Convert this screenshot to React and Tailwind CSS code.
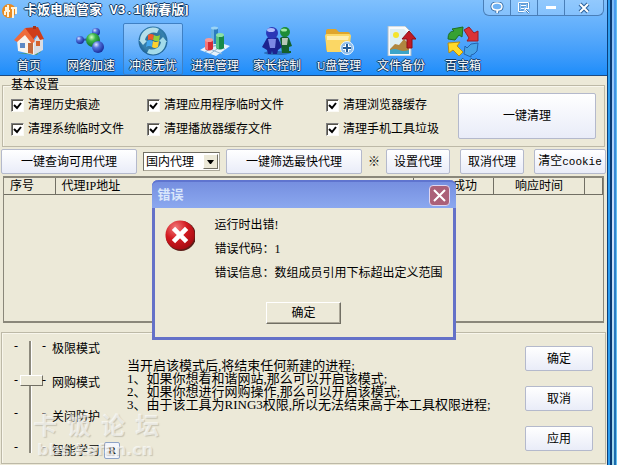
import React, { useState } from "react";

const buttonStyle =
  "rounded-xs border border-[#b4b9cc] bg-linear-to-b from-white to-[#e9ecf8] text-center whitespace-nowrap";

const HomeIcon = () => (
  <svg viewBox="0 0 30 30" className="size-[30px]">
    <path d="M3 27h23l2-4-5 6z" fill="#4b9a35" opacity=".7" />
    <path d="M3 14 10 7l10 8v14L4 25z" fill="#f7f3ee" />
    <path d="m20 15 5-7 4 5v11l-9 5z" fill="#d9dce2" />
    <path d="m11 2 13-1 6 12-4 1-3-5-5 6z" fill="#cf3d1b" />
    <path d="M0 14 11 2l10 13-3 3-7-9-8 7z" fill="#ee6b3c" />
    <path d="M14 17h5v11l-5-1z" fill="#c2683a" />
    <path d="M6 17h5v5H6z" fill="#5b88c4" />
    <path d="M22 15h4v5h-4z" fill="#d5632c" />
    <path d="M19 3V0h3v3z" fill="#a63319" />
  </svg>
);

const NetworkIcon = () => (
  <svg viewBox="0 0 30 30" className="size-[30px]">
    <defs>
      <radialGradient id="ballBlue" cx=".35" cy=".3" r=".7">
        <stop offset="0" stopColor="#dfe6ff" />
        <stop offset=".4" stopColor="#5272dc" />
        <stop offset="1" stopColor="#1b2f9c" />
      </radialGradient>
      <radialGradient id="ballGreen" cx=".4" cy=".3" r=".7">
        <stop offset="0" stopColor="#d3ffc6" />
        <stop offset=".4" stopColor="#3db649" />
        <stop offset="1" stopColor="#0c6a2b" />
      </radialGradient>
    </defs>
    <path d="m5 14 11-1 5-8M16 14l7 8" stroke="#31539f" strokeWidth="2" fill="none" />
    <circle cx="4" cy="14" r="4" fill="url(#ballBlue)" />
    <circle cx="20" cy="6" r="4" fill="url(#ballBlue)" />
    <circle cx="17" cy="14" r="7" fill="url(#ballGreen)" />
    <circle cx="22" cy="21" r="6" fill="url(#ballBlue)" />
  </svg>
);

const SurfIcon = () => (
  <svg viewBox="0 0 30 30" className="size-[30px]">
    <defs>
      <radialGradient id="orb" cx=".5" cy=".45" r=".55">
        <stop offset="0" stopColor="#2a5f88" />
        <stop offset=".7" stopColor="#3681ae" />
        <stop offset="1" stopColor="#1c5f93" />
      </radialGradient>
    </defs>
    <circle cx="15" cy="15" r="14.5" fill="url(#orb)" />
    <path d="M2 14A13 13 0 0 1 21 3l-2 4A9 9 0 0 0 7 14l2 1-4 4-4-5z" fill="#b5dfe9" />
    <path d="M28 16A13 13 0 0 1 9 27l2-4a9 9 0 0 0 12-7l-2-1 4-4 4 5z" fill="#a3dbea" />
    <path d="M10 9q3-2 6 0l-1 5q-3-1-5 0z" fill="#f0582a" />
    <path d="M16 9q3 2 6 0l-1 6q-3 1-6-1z" fill="#8fce3c" />
    <path d="M9 15q3-2 6 0l-1 6q-3-2-6 0z" fill="#42a7ee" />
    <path d="M15 15q3 2 6 0l-1 6q-3 2-6 0z" fill="#ffd02e" />
  </svg>
);

const ProcessIcon = () => (
  <svg viewBox="0 0 30 30" className="size-[30px]">
    <path d="m0 24 15-9 15 5-14 10z" fill="#e6f1fa" />
    <path d="m5 21 17 7M10 18l15 5M5 26l16-10M10 28l14-10" stroke="#8fb5d4" />
    <path d="M11 2h7v16h-7z" fill="#2b7cc0" />
    <path d="M11 2h3v16h-3z" fill="#65b0e4" />
    <ellipse cx="14.500" cy="2" rx="3.500" ry="1.500" fill="#9ad3f5" />
    <path d="M5 14h8v9q-4 3-8 0z" fill="#d32b34" />
    <path d="M5 14h3v10l-3-1z" fill="#f3777a" />
    <ellipse cx="9" cy="14" rx="4" ry="2" fill="#f79a98" />
    <path d="M16 9h8v13q-4 3-8 0z" fill="#178a49" />
    <path d="M16 9h3v14l-3-1z" fill="#55c282" />
    <ellipse cx="20" cy="9" rx="4" ry="2" fill="#8be0a8" />
  </svg>
);

const ParentIcon = () => (
  <svg viewBox="0 0 30 30" className="size-[30px]">
    <ellipse cx="15" cy="27" rx="13" ry="2" fill="#123f77" opacity=".5" />
    <path d="M18 12q5-4 9 0l3 8-3 1v4h2v2h-9z" fill="#14602c" />
    <path d="M20 12h6l-1 7h-5z" fill="#b7c7b7" />
    <circle cx="23" cy="6" r="5" fill="#1d8d36" />
    <ellipse cx="22" cy="4" rx="3" ry="1.500" fill="#a0e8a4" />
    <path d="M5 12q6-3 11 0l4 9-4 3-1 4h-4l-1-3-1 3H6l-1-4-5-3z" fill="#1c238f" />
    <path d="M6 13h8l-1 9H8z" fill="#7c89e4" />
    <circle cx="10" cy="7" r="6" fill="#2b37b7" />
    <ellipse cx="9" cy="4" rx="4" ry="2" fill="#b2bdfb" />
  </svg>
);

const UsbIcon = () => (
  <svg viewBox="0 0 30 30" className="size-[30px]">
    <path d="M2 5q0-2 2-2h8l3 3h9q2 0 2 2v17H4q-2 0-2-2z" fill="#dfa52c" />
    <path d="M1 10q0-2 2-2h22q2 0 2 2l-2 16H3z" fill="#fbd765" />
    <path d="M3 10h22l-1 4H3z" fill="#ffeeb0" />
    <circle cx="23" cy="22" r="6.500" fill="#8fbce8" stroke="#e9f5ff" />
    <path d="M23 18v8M19 22h8" stroke="#fff" strokeWidth="4" />
    <path d="M23 18v8M19 22h8" stroke="#245b95" strokeWidth="2" />
  </svg>
);

const BackupIcon = () => (
  <svg viewBox="0 0 30 30" className="size-[30px]">
    <path d="M2 0h17l6 6v24H2z" fill="#f8fafb" stroke="#a9bccb" />
    <path d="M4 3h14l5 5v20H4z" fill="#dceef4" />
    <circle cx="10" cy="9" r="3" fill="#f5e42e" />
    <path d="m4 23 5-5 4 1 5-6 5 5v7H4z" fill="#b0863f" />
    <path d="M4 24q5-2 9 0t10 0v4H4z" fill="#3ca5c8" />
    <path d="m23 5 7 8h-4v9h-5v-9h-5z" fill="#c01c24" stroke="#8d0e16" />
  </svg>
);

const ToolboxIcon = () => (
  <svg viewBox="0 0 32 32" className="size-8">
    <path d="M1 13Q1 5 7 5L5 3l11-2-1 10-3-2-4 5z" fill="#36a132" stroke="#1e6f22" />
    <path d="m17 4 5-3 5 6 4-2v10H20l2-3z" fill="#db3236" stroke="#991c26" />
    <path d="m1 17 12-1-3 4 6 6-4 4-6-6-4 3z" fill="#ffda2a" stroke="#b98d10" />
    <path d="m31 17-1 8q-3 4-6 4v2l-7-3 1-8 2 2 4-4z" fill="#47a4e8" stroke="#2264af" />
  </svg>
);

const tools = [
  { name: "首页", Icon: HomeIcon },
  { name: "网络加速", Icon: NetworkIcon },
  { name: "冲浪无忧", Icon: SurfIcon, active: true },
  { name: "进程管理", Icon: ProcessIcon },
  { name: "家长控制", Icon: ParentIcon },
  { name: "U盘管理", Icon: UsbIcon },
  { name: "文件备份", Icon: BackupIcon },
  { name: "百宝箱", Icon: ToolboxIcon },
];

const cleanOptions = [
  "清理历史痕迹",
  "清理应用程序临时文件",
  "清理浏览器缓存",
  "清理系统临时文件",
  "清理播放器缓存文件",
  "清理手机工具垃圾",
];

const modes = ["极限模式", "网购模式", "关闭防护", "智能学习"];

const outlined =
  "text-white [text-shadow:1px_0_#123a66,-1px_0_#123a66,0_1px_#123a66,0_-1px_#123a66]";

const WindowControls = () => (
  <div className="mr-[3px] flex h-4 divide-x divide-[#4a7fb8] rounded-b-md border border-t-0 border-[#4a7fb8] bg-white/15">
    <button aria-label="反馈" className="flex w-[27px] items-center justify-center">
      <svg viewBox="0 0 14 12" className="h-3 w-3.5">
        <path
          d="M7 1c3 0 5 1 5 3.500S10 8 8 8l-1 3V8C4 8 2 7 2 4.500S4 1 7 1z"
          fill="none"
          stroke="#2c629c"
          strokeWidth="3"
        />
        <path
          d="M7 1c3 0 5 1 5 3.500S10 8 8 8l-1 3V8C4 8 2 7 2 4.500S4 1 7 1z"
          fill="#6fb2f4"
          stroke="#fff"
          strokeWidth="1.500"
        />
      </svg>
    </button>
    <button aria-label="菜单" className="flex w-[27px] items-center justify-center">
      <svg viewBox="0 0 12 12" className="size-3">
        <path d="M.5.5h10v6M.5.500v9h5M3 3.500h5M3 6.500h3M7 7l4 4" fill="none" stroke="#3f78b4" strokeWidth="2" />
        <path d="M6 9.500H.5v-9h10V6M3 3.500h5M3 6.500h3m1 .5 4 4m-4-1V6.500h4" fill="none" stroke="#fff" />
      </svg>
    </button>
    <button aria-label="最小化" className="flex w-[27px] items-center justify-center">
      <span className="h-[3px] w-2.5 bg-white"></span>
    </button>
    <button aria-label="关闭" className="flex w-[38px] items-center justify-center">
      <svg viewBox="0 0 12 12" className="size-3">
        <path d="m2 2 8 8m0-8-8 8" stroke="#2c629c" strokeWidth="4" />
        <path d="m2 2 8 8m0-8-8 8" stroke="#fff" strokeWidth="2" />
      </svg>
    </button>
  </div>
);

const Header = () => (
  <header className="border-b border-[#1d4a80] bg-linear-to-b from-[#7fc0fd] via-[#55a8fb] to-[#1b8dfa]">
    <div className="flex h-[23px] items-start justify-between">
      <div className="flex items-center gap-1.5 pl-0.5">
        <svg viewBox="0 0 16 18" className="h-[18px] w-4">
          <circle cx="7" cy="9" r="7" fill="#e98b22" />
          <path d="M4 5v4h4M6 3v12M3 9v4M11 5v11M9 6h5v6" fill="none" stroke="#fff4dc" strokeWidth="2" />
        </svg>
        <h1 className={`text-[13px] leading-5 font-bold ${outlined}`}>
          卡饭电脑管家<span className="font-['Liberation_Mono']"> V3.1</span>
          [新春版]
        </h1>
      </div>
      <WindowControls />
    </div>
    <nav className="-ml-px flex gap-0.5">
      {tools.map(({ name, Icon, active }) => (
        <button
          key={name}
          className={`flex h-[52px] w-[60px] flex-col items-center justify-between rounded-xs border pt-0.5 ${
            active
              ? "border-[#3f80c4] bg-linear-to-b from-white/30 to-white/5"
              : "border-transparent"
          }`}
        >
          <Icon />
          <span className={`leading-4 whitespace-nowrap ${outlined}`}>{name}</span>
        </button>
      ))}
    </nav>
  </header>
);

const CheckOption = ({ label }) => (
  <label className="flex items-center gap-1">
    <span className="grid">
      <input
        type="checkbox"
        defaultChecked
        className="peer col-start-1 row-start-1 size-[13px] appearance-none border border-t-[#808080] border-r-[#fbfaf5] border-b-[#fbfaf5] border-l-[#808080] bg-white shadow-[inset_1px_1px_#55534a]"
      />
      <svg
        viewBox="0 0 13 13"
        className="pointer-events-none invisible col-start-1 row-start-1 size-[13px] peer-checked:visible"
      >
        <path d="m3 6 3 3 4-5" fill="none" stroke="#000" strokeWidth="2" />
      </svg>
    </span>
    {label}
  </label>
);

const ErrorDialog = ({ onClose }) => (
  <div
    role="dialog"
    aria-labelledby="error-title"
    className="absolute top-[180px] left-1/2 w-[304px] -translate-x-1/2 rounded-t-md border-x-3 border-b-3 border-[#6471c8] bg-[#ece9d8]"
  >
    <div className="-mx-[3px] flex h-7 items-center justify-between rounded-t-md border-t-2 border-[#5f74cf] bg-linear-to-b from-[#768fe0] to-[#8ba8ef] pr-1.5 pl-1.5">
      <h2 id="error-title" className="text-[13px] font-bold text-[#d9e6fb]">
        错误
      </h2>
      <button
        aria-label="关闭"
        onClick={onClose}
        className="flex size-[21px] items-center justify-center rounded-sm border border-[#dfd6f0] bg-[#ab6078]"
      >
        <svg viewBox="0 0 13 13" className="size-[13px]">
          <path d="m1 1 11 11m0-11L1 12" stroke="#fff" strokeWidth="2" />
        </svg>
      </button>
    </div>
    <div className="flex gap-[19px] px-2.5 pt-[5px]">
      <svg viewBox="0 0 33 33" className="mt-1.5 size-[33px]">
        <defs>
          <radialGradient id="error" cx=".35" cy=".25" r=".8">
            <stop offset="0" stopColor="#f27a7a" />
            <stop offset=".5" stopColor="#d21a20" />
            <stop offset="1" stopColor="#a30a10" />
          </radialGradient>
        </defs>
        <circle cx="17" cy="17" r="16" fill="#5b1d18" />
        <circle cx="16" cy="16" r="15.500" fill="url(#error)" />
        <path d="m9 9 14 14m0-14L9 23" stroke="#fff" strokeWidth="5" />
      </svg>
      <div className="leading-6 whitespace-nowrap">
        <p>运行时出错!</p>
        <p>错误代码：1</p>
        <p>错误信息：数组成员引用下标超出定义范围</p>
      </div>
    </div>
    <div className="pt-[17px] pb-[13px] text-center">
      <button
        onClick={onClose}
        className="h-[22px] w-[75px] border border-t-white border-r-[#716f64] border-b-[#716f64] border-l-white shadow-[inset_-1px_-1px_#aca899]"
      >
        确定
      </button>
    </div>
  </div>
);

const CleanSettings = () => (
  <fieldset className="mx-0.5 mt-px flex items-center justify-between border border-[#bdb9a7] pr-2 pb-[7px] pl-2 shadow-[inset_1px_1px_#f8f6ec]">
    <legend className="leading-4">基本设置</legend>
    <div className="grid grid-cols-[136px_179px_auto] gap-y-2 pt-0.5 leading-4">
      {cleanOptions.map((option) => (
        <CheckOption key={option} label={option} />
      ))}
    </div>
    <button className={`h-[46px] w-[138px] ${buttonStyle}`}>一键清理</button>
  </fieldset>
);

const ProxyBar = () => (
  <div className="mt-0.5 flex items-center justify-between px-px">
    <div className="flex items-center gap-1.5">
      <button className={`h-[25px] w-[136px] ${buttonStyle}`}>一键查询可用代理</button>
      <div className="relative">
        <select
          aria-label="代理类型"
          className="block h-[19px] w-[77px] appearance-none border border-t-[#716f64] border-r-[#aca899] border-b-[#aca899] border-l-[#716f64] bg-white pl-0.5"
        >
          <option>国内代理</option>
          <option>国外代理</option>
        </select>
        <span className="pointer-events-none absolute inset-y-0.5 right-0.5 flex w-[15px] items-center justify-center border border-t-white border-r-[#716f64] border-b-[#716f64] border-l-white bg-[#ece9d8]">
          <svg viewBox="0 0 7 4" className="h-1 w-[7px]">
            <path d="M0 0h7L4 4H3z" />
          </svg>
        </span>
      </div>
      <button className={`h-[25px] w-[136px] ${buttonStyle}`}>一键筛选最快代理</button>
      <span>※</span>
    </div>
    <div className="flex gap-2.5">
      <button className={`h-[25px] w-16 ${buttonStyle}`}>设置代理</button>
      <button className={`h-[25px] w-16 ${buttonStyle}`}>取消代理</button>
      <button className={`h-[25px] w-[72px] ${buttonStyle}`}>
        清空<span className="font-['Liberation_Mono'] text-[11px]">cookie</span>
      </button>
    </div>
  </div>
);

const ProxyTable = () => (
  <div className="mx-[3px] mt-0.5 h-[147px] border-x border-t-2 border-b-2 border-[#8a877a]">
    <table className="w-full table-fixed border-collapse text-left leading-4">
      <thead>
        <tr className="border-b border-[#716f64] [&>th]:border-r [&>th]:border-[#716f64] [&>th]:p-0 [&>th]:font-normal">
          <th className="w-[51px]">
            <span className="pl-1.5">序号</span>
          </th>
          <th>
            <span className="pl-1.5">代理IP地址</span>
          </th>
          <th className="w-20 text-right">
            <span className="pr-4">成功</span>
          </th>
          <th className="w-[91px] text-center">响应时间</th>
          <th className="w-[18px]"></th>
        </tr>
      </thead>
      <tbody></tbody>
    </table>
  </div>
);

const ModePanel = () => {
  const [mode, setMode] = useState(1);

  return (
    <section className="mx-px mt-[9px] flex justify-between border border-[#bdb9a7] pr-3 shadow-[inset_1px_1px_#f8f6ec]">
      <div className="flex pt-2 pb-1 pl-3">
        <div className="flex h-28 flex-col justify-between text-center leading-[11px]">
          {modes.map((name) => (
            <span key={name}>-</span>
          ))}
        </div>
        <input
          type="range"
          aria-label="防护模式"
          min="0"
          max="3"
          value={mode}
          onChange={(e) => setMode(Number(e.target.value))}
          className="h-28 w-6 appearance-none bg-transparent [writing-mode:vertical-lr] [&::-webkit-slider-runnable-track]:w-[3px] [&::-webkit-slider-runnable-track]:border-r [&::-webkit-slider-runnable-track]:border-l-2 [&::-webkit-slider-runnable-track]:border-l-[#8c897c] [&::-webkit-slider-runnable-track]:border-r-white [&::-webkit-slider-thumb]:-ml-[11px] [&::-webkit-slider-thumb]:h-[11px] [&::-webkit-slider-thumb]:w-[23px] [&::-webkit-slider-thumb]:appearance-none [&::-webkit-slider-thumb]:border [&::-webkit-slider-thumb]:border-t-white [&::-webkit-slider-thumb]:border-r-[#716f64] [&::-webkit-slider-thumb]:border-b-[#716f64] [&::-webkit-slider-thumb]:border-l-white [&::-webkit-slider-thumb]:bg-[#ece9d8]"
        />
        <div className="flex h-28 flex-col justify-between leading-[11px]">
          {modes.map((name) => (
            <span key={name}>-</span>
          ))}
        </div>
        <div className="flex h-[118px] flex-col justify-between pl-1.5 leading-4">
          {modes.map((name) => (
            <span key={name}>{name}</span>
          ))}
        </div>
        <button className="ml-1 h-[17px] w-4 self-end rounded-xs border border-[#8ea3c6] bg-[#f3f5fb] text-[10px] leading-3 font-bold">
          R
        </button>
      </div>
      <div className="mr-auto ml-[7px] pt-[26px] pb-[52px] text-[13px] leading-[13px] whitespace-nowrap">
        <p>当开启该模式后,将结束任何新建的进程;</p>
        <p>1、如果你想看和谐网站,那么可以开启该模式;</p>
        <p>2、如果你想进行网购操作,那么可以开启该模式;</p>
        <p>3、由于该工具为RING3权限,所以无法结束高于本工具权限进程;</p>
      </div>
      <div className="flex flex-col gap-[15px] pt-[13px]">
        {["确定", "取消", "应用"].map((name) => (
          <button key={name} className={`h-[25px] w-[68px] ${buttonStyle}`}>
            {name}
          </button>
        ))}
      </div>
    </section>
  );
};

const WindowEdge = () => (
  <div className="flex">
    <div className="w-px bg-[#0b3f7c]"></div>
    <div className="w-0.5 bg-[#2f9ff0]"></div>
    <div className="w-0.5 bg-[#0a3a72]"></div>
    <div className="w-0.5 bg-linear-to-b from-[#7dbcf8] via-[#cfe0fb] to-[#9bd6ec]"></div>
    <div className="w-0.5 bg-linear-to-b from-[#4a9cf0] to-[#1c6cae]"></div>
    <div className="w-px bg-[#64c0ee]"></div>
  </div>
);

const App = () => {
  const [showError, setShowError] = useState(true);

  return (
    <div className="flex min-h-screen overflow-hidden font-['Liberation_Serif','Noto_Sans_CJK_SC',sans-serif] text-xs text-black">
      <main className="relative min-w-0 flex-1 bg-[#ece9d8]">
        <Header />
        <CleanSettings />
        <ProxyBar />
        <ProxyTable />
        <ModePanel />
        {showError && <ErrorDialog onClose={() => setShowError(false)} />}
        <div className="pointer-events-none absolute top-[410px] left-[33px] leading-none font-bold whitespace-nowrap text-white/60 [text-shadow:1px_1px_1px_#8f8c7c66]">
          <p className="flex w-[126px] justify-between text-2xl leading-8">
            <span>卡</span>
            <span>饭</span>
            <span>论</span>
            <span>坛</span>
          </p>
          <p className="pl-1 font-['DejaVu_Sans'] text-base leading-4">bbs.kafan.cn</p>
        </div>
      </main>
      <WindowEdge />
    </div>
  );
};

export default App;
